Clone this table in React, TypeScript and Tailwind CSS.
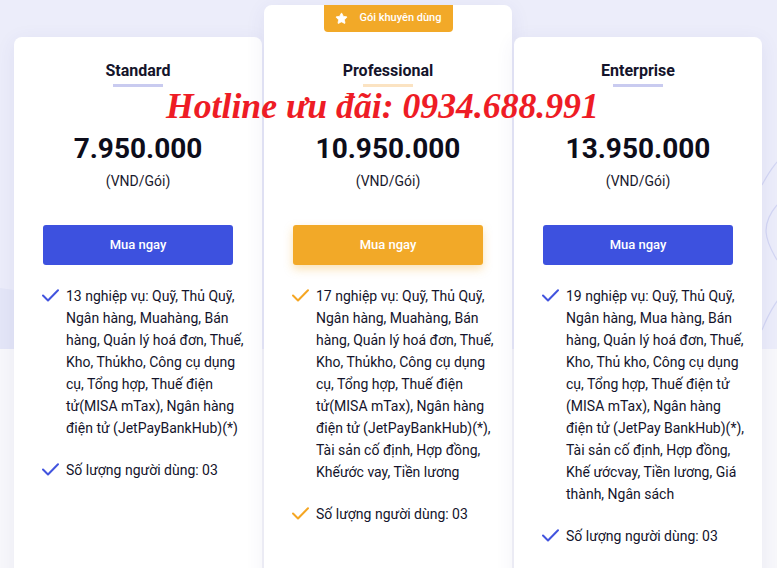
import { Star } from 'lucide-react';

interface Plan {
  name: string;
  price: string;
  features: string;
  users: string;
  featured?: boolean;
}

const plans: Plan[] = [
  {
    name: 'Standard',
    price: '7.950.000',
    features:
      '13 nghiệp vụ: Quỹ, Thủ Quỹ, Ngân hàng, Muahàng, Bán hàng, Quản lý hoá đơn, Thuế, Kho, Thủkho, Công cụ dụng cụ, Tổng hợp, Thuế điện tử(MISA mTax), Ngân hàng điện tử (JetPayBankHub)(*)',
    users: 'Số lượng người dùng: 03',
  },
  {
    name: 'Professional',
    price: '10.950.000',
    features:
      '17 nghiệp vụ: Quỹ, Thủ Quỹ, Ngân hàng, Muahàng, Bán hàng, Quản lý hoá đơn, Thuế, Kho, Thủkho, Công cụ dụng cụ, Tổng hợp, Thuế điện tử(MISA mTax), Ngân hàng điện tử (JetPayBankHub)(*), Tài sản cố định, Hợp đồng, Khếước vay, Tiền lương',
    users: 'Số lượng người dùng: 03',
    featured: true,
  },
  {
    name: 'Enterprise',
    price: '13.950.000',
    features:
      '19 nghiệp vụ: Quỹ, Thủ Quỹ, Ngân hàng, Mua hàng, Bán hàng, Quản lý hoá đơn, Thuế, Kho, Thủ kho, Công cụ dụng cụ, Tổng hợp, Thuế điện tử (MISA mTax), Ngân hàng điện tử (JetPay BankHub)(*), Tài sản cố định, Hợp đồng, Khế ướcvay, Tiền lương, Giá thành, Ngân sách',
    users: 'Số lượng người dùng: 03',
  },
];

function CheckMark({ className }: { className: string }) {
  return (
    <svg className={className} width="17" height="13" viewBox="0 0 17 13" fill="none">
      <path d="M1 6.5 L6 11.5 L16 1.2" stroke="currentColor" strokeWidth="2" strokeLinecap="round" strokeLinejoin="round" />
    </svg>
  );
}

function PlanCard({ plan }: { plan: Plan }) {
  const checkColor = plan.featured ? 'text-[#f5a623]' : 'text-[#4254de]';
  return (
    <div
      className={`w-[248px] min-h-[620px] bg-white rounded-lg shadow-[0_4px_20px_rgba(60,70,150,0.08)] flex flex-col items-center ${
        plan.featured ? '' : 'mt-[32px]'
      }`}
    >
      {plan.featured && (
        <div className="h-[27px] w-[129px] bg-[#f2a928] rounded-b-[4px] flex items-center justify-center gap-[12px] text-white text-[11px] font-medium">
          <Star className="w-[13px] h-[13px] fill-white" strokeWidth={1.5} />
          <span>Gói khuyên dùng</span>
        </div>
      )}
      <h3
        className={`${plan.featured ? 'mt-[29px]' : 'mt-[24px]'} text-[16px] leading-[20px] font-bold text-[#14142b]`}
      >
        {plan.name}
      </h3>
      <div className={`mt-[3px] h-[3px] w-[50px] ${plan.featured ? 'bg-[#fbe3c2]' : 'bg-[#c9cbf0]'}`} />
      <div className="mt-[46px] text-[28px] leading-[32px] font-bold text-[#0d0d1a]">{plan.price}</div>
      <div className="mt-[7px] text-[14px] leading-[18px] text-[#1a1a2e]">(VND/Gói)</div>
      <button
        className={`mt-[35px] w-[190px] h-[40px] rounded-[3px] text-white text-[13px] font-medium ${
          plan.featured ? 'bg-[#f2a928] shadow-[0_4px_10px_rgba(242,169,40,0.35)]' : 'bg-[#3d51df]'
        }`}
      >
        Mua ngay
      </button>
      <ul className="mt-[20px] w-full pl-[28px] pr-[14px] flex flex-col gap-[20px] text-[14px] leading-[22px] text-[#14142b]">
        {[plan.features, plan.users].map((text, i) => (
          <li key={i} className="flex gap-[7px]">
            <CheckMark className={`mt-[4px] shrink-0 ${checkColor}`} />
            <span>{text}</span>
          </li>
        ))}
      </ul>
    </div>
  );
}

export default function App() {
  return (
    <div className="relative w-[777px] h-[568px] overflow-hidden bg-[#f8f8fb] font-['Roboto',sans-serif]">
      {/* background band + decorative strokes */}
      <div className="absolute inset-x-0 top-0 h-[349px] bg-[#ecedfa]" />
      <svg className="absolute inset-0" width="777" height="568" viewBox="0 0 777 568" fill="none">
        <path d="M0 288 L14 290 L14 349 L0 349 Z" fill="#e4e6f7" />
        <path d="M762 185 C770 170 777 160 790 150" stroke="#d3d6f3" strokeWidth="1.2" />
        <path d="M777 205 C760 225 765 240 777 260" stroke="#d3d6f3" strokeWidth="1.2" />
        <path d="M762 330 C770 310 777 300 790 285" stroke="#d3d6f3" strokeWidth="1.2" />
      </svg>

      <div className="relative flex items-start gap-[2px] pl-[14px] pt-[5px]">
        {plans.map((p) => (
          <PlanCard key={p.name} plan={p} />
        ))}
      </div>

      <div className="absolute left-[166px] top-[84px] text-[35.7px] leading-[44px] font-bold italic text-[#ee1c25] font-['Liberation_Serif',serif] whitespace-nowrap">
        Hotline ưu đãi: 0934.688.991
      </div>
    </div>
  );
}
